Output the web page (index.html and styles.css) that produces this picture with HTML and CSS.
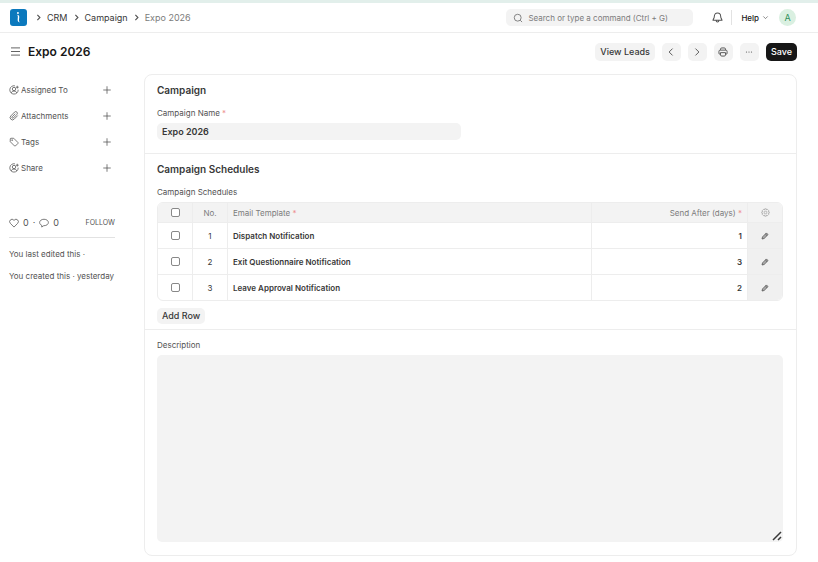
FILE: index.html
```html
<!DOCTYPE html>
<html lang="en">
<head>
    <meta charset="UTF-8">
    <meta name="viewport" content="width=device-width, initial-scale=1.0">
    <title>Expo 2026</title>
    <link rel="stylesheet" href="styles.css">
</head>
<body>

    <!-- Icons shared by several buttons -->
    <svg class="sprite" aria-hidden="true">
        <symbol id="icon-right" viewBox="0 0 16 16"><path d="M6 3.5 10.5 8 6 12.5"/></symbol>
        <symbol id="icon-plus" viewBox="0 0 16 16"><path d="M8 2v12M2 8h12"/></symbol>
        <symbol id="icon-assign" viewBox="0 0 16 16">
            <path d="M9.500 1.300A6.700 6.700 0 1 0 14.700 7.500"/>
            <circle cx="8" cy="6.400" r="2.700"/>
            <path d="M3.300 12.800c.8-2.100 2.500-3 4.700-3s3.900.9 4.700 3M11 3.500h4.500M13.200 1.200v4.500"/>
        </symbol>
        <symbol id="icon-edit" viewBox="0 0 16 16">
            <path d="M2 14l1-4.200 7.800-7.900 3.300 3.300-7.900 7.800z"/>
            <path d="M8.800 4l3.300 3.300"/>
        </symbol>
    </svg>

    <header class="navbar">
        <nav class="breadcrumbs">
            <a href="#" class="logo" aria-label="Home">
                <svg viewBox="0 0 18 18">
                    <circle cx="8.400" cy="4.200" r="1" fill="#fff"/>
                    <path d="M7 6.200c1.600-.1 2.900.6 2.800 2.200l-.3 3.200c-.1 1.300.3 2 1.300 2.400-1.700.3-2.800-.6-2.700-2.500l.2-3c.1-1.200-.3-1.900-1.300-2.300z" fill="#fff"/>
                </svg>
            </a>
            <svg class="sep"><use href="#icon-right"/></svg>
            <a href="#">CRM</a>
            <svg class="sep"><use href="#icon-right"/></svg>
            <a href="#">Campaign</a>
            <svg class="sep"><use href="#icon-right"/></svg>
            <a href="#" class="current">Expo 2026</a>
        </nav>

        <div class="search">
            <svg class="icon" viewBox="0 0 16 16"><circle cx="7.500" cy="7.500" r="5.500"/><path d="M11.500 11.500l3 3"/></svg>
            <input type="text" placeholder="Search or type a command (Ctrl + G)" aria-label="Search">
        </div>

        <button class="bell" aria-label="Notifications">
            <svg viewBox="0 0 16 16"><path d="M8 1.500c-2.900 0-4.600 2.100-4.600 4.700 0 3.300-1.900 4-1.900 5.800h13c0-1.800-1.900-2.500-1.900-5.800 0-2.600-1.700-4.700-4.600-4.700zM6 12.300c0 1.500.9 2.200 2 2.200s2-.7 2-2.200"/></svg>
        </button>
        <button class="help">Help
            <svg viewBox="0 0 16 16"><path d="M3 5.500 8 10.500 13 5.500"/></svg>
        </button>
        <button class="avatar">A</button>
    </header>

    <div class="page-head">
        <button class="menu-btn" aria-label="Toggle sidebar">
            <svg viewBox="0 0 10 10"><path d="M0 1h10M0 5h10M0 9h10"/></svg>
        </button>
        <h1>Expo 2026</h1>
        <div class="actions">
            <button class="btn">View Leads</button>
            <button class="btn btn-icon" aria-label="Previous"><svg viewBox="0 0 16 16"><path d="M10.500 2.500 5 8l5.500 5.500"/></svg></button>
            <button class="btn btn-icon" aria-label="Next"><svg viewBox="0 0 16 16"><path d="M5.500 2.500 11 8l-5.500 5.500"/></svg></button>
            <button class="btn btn-icon" aria-label="Print">
                <svg viewBox="0 0 16 16"><path d="M4 5V3.500a2 2 0 0 1 2-2h4a2 2 0 0 1 2 2V5M4 11.500H3a1.500 1.500 0 0 1-1.500-1.500V7a2 2 0 0 1 2-2h9a2 2 0 0 1 2 2v3a1.500 1.500 0 0 1-1.500 1.500h-1M4 9h8v3.500a2 2 0 0 1-2 2H6a2 2 0 0 1-2-2z"/></svg>
            </button>
            <button class="btn btn-icon" aria-label="Menu">
                <svg class="dots" viewBox="0 0 16 16"><circle cx="3" cy="8" r="1.200"/><circle cx="8" cy="8" r="1.200"/><circle cx="13" cy="8" r="1.200"/></svg>
            </button>
            <button class="btn btn-primary">Save</button>
        </div>
    </div>

    <div class="layout">
        <aside class="sidebar">
            <ul class="side-menu">
                <li>
                    <svg><use href="#icon-assign"/></svg>
                    <span>Assigned To</span>
                    <button aria-label="Assign"><svg><use href="#icon-plus"/></svg></button>
                </li>
                <li>
                    <svg viewBox="0 0 16 16"><path d="M14 7.200l-5.800 5.900a3.700 3.700 0 0 1-5.300-5.200l6-6.200a2.600 2.600 0 0 1 3.700 3.700l-5.700 5.800a1.300 1.300 0 0 1-1.900-1.900L10 4.300"/></svg>
                    <span>Attachments</span>
                    <button aria-label="Attach file"><svg><use href="#icon-plus"/></svg></button>
                </li>
                <li>
                    <svg viewBox="0 0 16 16"><path d="M2 3.200A1.200 1.200 0 0 1 3.200 2h4.300l6.800 6.800a1.100 1.100 0 0 1 0 1.500l-4 4a1.100 1.100 0 0 1-1.500 0L2 7.500z"/><circle cx="5" cy="5" r=".7"/></svg>
                    <span>Tags</span>
                    <button aria-label="Add tag"><svg><use href="#icon-plus"/></svg></button>
                </li>
                <li>
                    <svg><use href="#icon-assign"/></svg>
                    <span>Share</span>
                    <button aria-label="Share"><svg><use href="#icon-plus"/></svg></button>
                </li>
            </ul>

            <div class="stats">
                <button aria-label="Like"><svg viewBox="0 0 16 16"><path d="M8 14.500 2.200 8.600a3.800 3.800 0 0 1 0-5.500 3.800 3.800 0 0 1 5.300 0L8 3.700l.5-.6a3.800 3.800 0 0 1 5.300 0 3.800 3.800 0 0 1 0 5.500z"/></svg></button>
                <span>0</span>
                <span>·</span>
                <button aria-label="Comments"><svg viewBox="0 0 16 16"><path d="M8 2c-4 0-7 2.300-7 5.200 0 2 1.300 3.700 3.400 4.500v2.800l3.100-2.200H8c4 0 7-2.200 7-5.100S12 2 8 2z"/></svg></button>
                <span>0</span>
                <a href="#" class="follow">FOLLOW</a>
            </div>

            <p>You last edited this ·</p>
            <p>You created this · yesterday</p>
        </aside>

        <main class="form">
            <section>
                <h2>Campaign</h2>
                <label for="campaignName">Campaign Name <span class="req">*</span></label>
                <input type="text" class="control" id="campaignName" value="Expo 2026">
            </section>

            <section>
                <h2>Campaign Schedules</h2>
                <div class="label">Campaign Schedules</div>
                <table class="grid">
                    <colgroup>
                        <col class="col-small">
                        <col class="col-small">
                        <col>
                        <col class="col-days">
                        <col class="col-edit">
                    </colgroup>
                    <thead>
                        <tr>
                            <th class="center"><input type="checkbox" aria-label="Select all"></th>
                            <th class="center">No.</th>
                            <th>Email Template <span class="req">*</span></th>
                            <th class="right">Send After (days) <span class="req">*</span></th>
                            <th class="center">
                                <button class="gear" aria-label="Configure columns">
                                    <svg viewBox="0 0 16 16"><path d="M6.600 1.500h2.800l.5 1.900 1.700-.9 2 2-.9 1.700 1.900.5v2.600l-1.900.5.9 1.700-2 2-1.700-.9-.5 1.900H6.600l-.5-1.900-1.700.9-2-2 .9-1.700-1.900-.5V6.700l1.900-.5-.9-1.700 2-2 1.700.9z"/><circle cx="8" cy="8" r="2.300"/></svg>
                                </button>
                            </th>
                        </tr>
                    </thead>
                    <tbody>
                        <tr>
                            <td class="center"><input type="checkbox" aria-label="Select row 1"></td>
                            <td class="center">1</td>
                            <td class="bold">Dispatch Notification</td>
                            <td class="bold right">1</td>
                            <td class="center edit"><button aria-label="Edit row 1"><svg><use href="#icon-edit"/></svg></button></td>
                        </tr>
                        <tr>
                            <td class="center"><input type="checkbox" aria-label="Select row 2"></td>
                            <td class="center">2</td>
                            <td class="bold">Exit Questionnaire Notification</td>
                            <td class="bold right">3</td>
                            <td class="center edit"><button aria-label="Edit row 2"><svg><use href="#icon-edit"/></svg></button></td>
                        </tr>
                        <tr>
                            <td class="center"><input type="checkbox" aria-label="Select row 3"></td>
                            <td class="center">3</td>
                            <td class="bold">Leave Approval Notification</td>
                            <td class="bold right">2</td>
                            <td class="center edit"><button aria-label="Edit row 3"><svg><use href="#icon-edit"/></svg></button></td>
                        </tr>
                    </tbody>
                </table>
                <button class="btn btn-add">Add Row</button>
            </section>

            <section>
                <label for="description">Description</label>
                <div class="textarea-wrap">
                    <textarea id="description" rows="15"></textarea>
                    <svg class="grip" viewBox="0 0 10 10"><path d="M1 9l8-8M6 9l3-3"/></svg>
                </div>
            </section>
        </main>
    </div>

</body>
</html>
```
FILE: styles.css
```css
* {
    box-sizing: border-box;
}

body {
    margin: 0;
    font-family: Inter, "Liberation Sans", sans-serif;
    font-size: 9px;
    line-height: 12px;
    color: #383838;
    background-color: #fff;
    border-top: 3px solid #e2efeb;
}

button,
input,
textarea {
    font: inherit;
    color: inherit;
}

button {
    display: inline-flex;
    align-items: center;
    justify-content: center;
    padding: 0;
    border: none;
    background: none;
    cursor: pointer;
}

a {
    color: inherit;
    text-decoration: none;
}

svg {
    display: block;
    width: 10px;
    height: 10px;
    fill: none;
    stroke: #525252;
    stroke-width: 1.5;
    flex-shrink: 0;
}

.sprite {
    display: none;
}

/* Top bar */
.navbar {
    display: flex;
    align-items: center;
    height: 30px;
    padding: 0 22px 0 10px;
    border-bottom: 1px solid #ededed;
}

.breadcrumbs {
    display: flex;
    align-items: center;
    gap: 4px;
    flex: 1;
}

.logo {
    margin-right: 3px;
    border-radius: 3px;
    background-color: #0b79bd;
}

.logo svg {
    width: 17px;
    height: 17px;
    stroke: none;
}

.sep {
    width: 9px;
    height: 9px;
    stroke-width: 2;
}

.current {
    color: #7c7c7c;
}

.search {
    display: flex;
    align-items: center;
    gap: 5px;
    width: 187px;
    height: 17px;
    padding: 0 7px;
    border-radius: 5px;
    background-color: #f3f3f3;
}

.search svg {
    stroke: #7c7c7c;
}

.search input {
    flex: 1;
    min-width: 0;
    padding: 0;
    border: none;
    background: none;
    outline: none;
    font-size: 8px;
}

.search input::placeholder {
    color: #7c7c7c;
}

.bell {
    width: 38px;
    height: 15px;
    padding: 0 4px 0 14px;
}

.bell svg {
    width: 11px;
    height: 11px;
}

.help {
    gap: 3px;
    height: 15px;
    padding: 0 10px 0 9px;
    border-left: 1px solid #e2e2e2;
    color: #171717;
    font-size: 8px;
    font-weight: 500;
}

.help svg {
    width: 7px;
    height: 7px;
}

.avatar {
    width: 17px;
    height: 17px;
    border-radius: 50%;
    background-color: #daf0e1;
    color: #30905a;
}

/* Title and actions */
.page-head {
    display: flex;
    align-items: center;
    height: 37px;
    padding: 0 21px 0 11px;
}

.page-head h1 {
    flex: 1;
    margin: 0 0 0 8px;
    font-size: 12px;
    line-height: 16px;
    font-weight: 600;
    color: #171717;
}

.menu-btn svg {
    width: 9px;
    height: 9px;
    stroke-width: 1;
}

.actions {
    display: flex;
    gap: 7px;
}

.btn {
    height: 18px;
    padding: 0 5px;
    border-radius: 5px;
    background-color: #f3f3f3;
    font-size: 9px;
    font-weight: 500;
}

.btn:hover {
    background-color: #e2e2e2;
}

.btn-icon {
    width: 19px;
    padding: 0;
}

.btn-icon .dots {
    width: 8px;
    height: 8px;
    fill: #525252;
    stroke: none;
}

.btn-primary {
    background-color: #171717;
    color: #fff;
}

.btn-primary:hover {
    background-color: #383838;
}

/* Two columns */
.layout {
    display: flex;
    padding: 4px 21px 5px 9px;
}

.sidebar {
    width: 106px;
    margin-right: 29px;
    flex-shrink: 0;
    color: #525252;
    font-size: 8px;
}

.sidebar p {
    margin: 0 0 10px;
    white-space: nowrap;
}

.side-menu {
    margin: 0 0 32px;
    padding: 3px 0 0;
    list-style: none;
}

.side-menu li {
    display: flex;
    align-items: center;
    gap: 2px;
    height: 26px;
}

.side-menu span {
    flex: 1;
}

.side-menu button {
    margin-right: 3px;
}

.side-menu svg,
.stats svg {
    stroke-width: 1.2;
}

.stats {
    display: flex;
    align-items: center;
    gap: 4px;
    height: 25px;
    margin-bottom: 10px;
    padding-bottom: 4px;
    border-bottom: 1px solid #e2e2e2;
    font-size: 9px;
}

.follow {
    margin-left: auto;
    font-size: 7px;
}

/* Form card */
.form {
    flex: 1;
    min-width: 0;
    border: 1px solid #ededed;
    border-radius: 8px;
}

.form section {
    padding: 9px 13px 13px 12px;
}

.form section + section {
    border-top: 1px solid #ededed;
    padding-bottom: 5px;
}

.form section:last-child {
    padding-bottom: 13px;
}

.form h2 {
    margin: 0 0 11px;
    font-size: 10px;
    line-height: 12px;
    font-weight: 600;
}

.form label,
.form .label {
    display: block;
    margin-bottom: 4px;
    font-size: 8px;
    color: #525252;
}

.req {
    color: #ee8f8f;
}

.control {
    display: block;
    width: 304px;
    max-width: 100%;
    height: 17px;
    padding: 0 5px;
    border: none;
    border-radius: 5px;
    background-color: #f3f3f3;
    font-weight: 600;
}

/* Child table */
.grid {
    width: 100%;
    table-layout: fixed;
    border: 1px solid #ededed;
    border-radius: 6px;
    border-spacing: 0;
    overflow: hidden;
}

.grid .col-small {
    width: 35px;
}

.grid .col-days {
    width: 25%;
}

.grid .col-edit {
    width: 34px;
}

.grid th,
.grid td {
    height: 26px;
    padding: 0 5px;
    border-right: 1px solid #ededed;
    border-bottom: 1px solid #ededed;
    text-align: left;
    font-size: 8px;
}

.grid th {
    height: 20px;
    background-color: #f3f3f3;
    color: #7c7c7c;
    font-weight: 400;
}

.grid tr > :last-child {
    border-right: none;
}

.grid tbody tr:last-child td {
    height: 25px;
    border-bottom: none;
}

.grid .center {
    text-align: center;
}

.grid .right {
    text-align: right;
}

.grid .bold {
    font-weight: 600;
}

.grid .edit {
    background-color: #f0f0f0;
}

.grid button {
    display: flex;
    margin: 0 auto;
}

.grid button svg {
    width: 8px;
    height: 8px;
}

.grid td button svg {
    fill: #aaa;
}

.grid .gear svg {
    width: 9px;
    height: 9px;
    stroke: #999;
    stroke-width: 1.2;
}

.grid input {
    appearance: none;
    display: block;
    width: 9px;
    height: 9px;
    margin: 0 auto;
    border: 1px solid #888;
    border-radius: 2px;
    background-color: #fff;
}

.grid input:checked {
    background-color: #171717;
}

.btn-add {
    height: 16px;
    margin-top: 7px;
}

/* Description */
.textarea-wrap {
    position: relative;
}

.textarea-wrap textarea {
    display: block;
    width: 100%;
    padding: 4px 5px 3px;
    border: none;
    border-radius: 5px;
    background-color: #f3f3f3;
    resize: none;
}

.grip {
    position: absolute;
    right: 1px;
    bottom: 1px;
    stroke: #383838;
}
```
